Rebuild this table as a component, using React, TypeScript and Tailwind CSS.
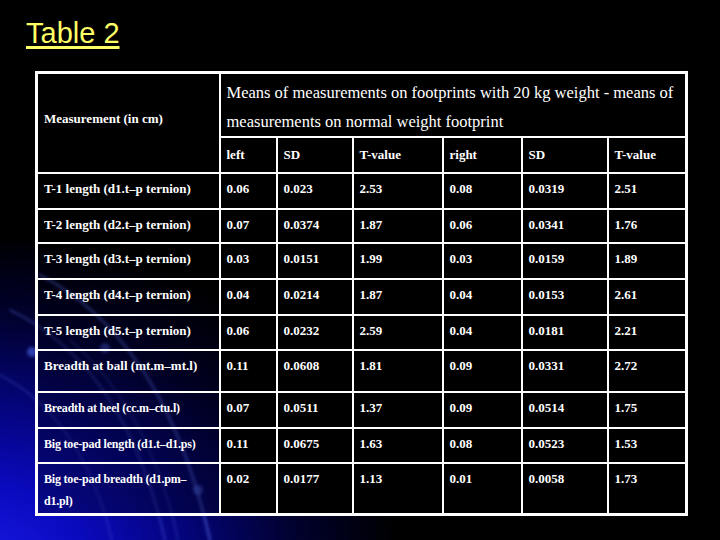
import React from "react";

type Row = {
  label: React.ReactNode;
  v: string[];
  h: string;
  small?: boolean;
};

const rows: Row[] = [
  { label: "T-1 length (d1.t–p ternion)", v: ["0.06", "0.023", "2.53", "0.08", "0.0319", "2.51"], h: "h-[36px]" },
  { label: "T-2 length (d2.t–p ternion)", v: ["0.07", "0.0374", "1.87", "0.06", "0.0341", "1.76"], h: "h-[34px]" },
  { label: "T-3 length (d3.t–p ternion)", v: ["0.03", "0.0151", "1.99", "0.03", "0.0159", "1.89"], h: "h-[36px]" },
  { label: "T-4 length (d4.t–p ternion)", v: ["0.04", "0.0214", "1.87", "0.04", "0.0153", "2.61"], h: "h-[36px]" },
  { label: "T-5 length (d5.t–p ternion)", v: ["0.06", "0.0232", "2.59", "0.04", "0.0181", "2.21"], h: "h-[35px]" },
  { label: "Breadth at ball (mt.m–mt.l)", v: ["0.11", "0.0608", "1.81", "0.09", "0.0331", "2.72"], h: "h-[42px]" },
  { label: "Breadth at heel (cc.m–ctu.l)", v: ["0.07", "0.0511", "1.37", "0.09", "0.0514", "1.75"], h: "h-[36px]", small: true },
  { label: "Big toe-pad length (d1.t–d1.ps)", v: ["0.11", "0.0675", "1.63", "0.08", "0.0523", "1.53"], h: "h-[35px]", small: true },
  {
    label: (
      <>
        Big toe-pad breadth (d1.pm–
        <br />
        d1.pl)
      </>
    ),
    v: ["0.02", "0.0177", "1.13", "0.01", "0.0058", "1.73"],
    h: "h-[51px]",
    small: true,
  },
];

function Background() {
  return (
    <svg className="absolute inset-0 w-full h-full" viewBox="0 0 720 540" preserveAspectRatio="none">
      <defs>
        <radialGradient
          id="bg"
          cx="-20"
          cy="570"
          r="420"
          gradientUnits="userSpaceOnUse"
          gradientTransform="translate(-20 570) scale(1 0.8) translate(20 -570)"
        >
          <stop offset="0" stopColor="#1a1ae6" />
          <stop offset="0.25" stopColor="#0a0ac0" />
          <stop offset="0.5" stopColor="#04047a" />
          <stop offset="0.75" stopColor="#010130" />
          <stop offset="1" stopColor="#000000" />
        </radialGradient>
        <filter id="blur" x="-50%" y="-50%" width="200%" height="200%">
          <feGaussianBlur stdDeviation="1.5" />
        </filter>
      </defs>
      <rect width="720" height="540" fill="#000" />
      <rect width="720" height="540" fill="url(#bg)" />
      <g fill="none" stroke="#5a70f0" strokeLinecap="round" filter="url(#blur)">
        <path d="M40 275 Q165 340 210 540" strokeWidth="3" strokeOpacity="0.45" />
        <path d="M10 310 Q125 365 165 540" strokeWidth="2" strokeOpacity="0.35" />
        <path d="M70 340 Q150 410 178 540" strokeWidth="1.5" strokeOpacity="0.3" />
        <path d="M-10 370 Q80 410 112 540" strokeWidth="2" strokeOpacity="0.25" />
      </g>
      <g fill="#4a62e8" filter="url(#blur)">
        <circle cx="32" cy="352" r="5" fillOpacity="0.6" />
        <circle cx="105" cy="348" r="5" fillOpacity="0.5" />
        <circle cx="198" cy="490" r="5" fillOpacity="0.5" />
      </g>
    </svg>
  );
}

export default function App() {
  const head = "border-2 border-white bg-black align-middle pl-[6px] leading-[22px] text-[13px] font-bold";
  const data = "border-2 border-white bg-black align-top pl-[6px] pt-[4px] leading-[22px] text-[13px] font-bold";
  return (
    <div className="relative w-[720px] h-[540px] overflow-hidden bg-black" style={{ fontFamily: '"Liberation Serif", "Times New Roman", serif' }}>
      <Background />
      <div className="relative">
        <div className="pl-[26px] pt-[17px]">
          <span
            className="text-[29px] leading-[33px] text-[#ffff66] underline decoration-[3px] underline-offset-[3px]"
            style={{ fontFamily: '"Liberation Sans", Arial, sans-serif' }}
          >
            Table 2
          </span>
        </div>
        <table className="ml-[35px] mt-[21px] w-[650px] table-fixed border-collapse border-[3px] border-white text-white">
          <colgroup>
            <col className="w-[183px]" />
            <col className="w-[57px]" />
            <col className="w-[76px]" />
            <col className="w-[90px]" />
            <col className="w-[79px]" />
            <col className="w-[86px]" />
            <col className="w-[79px]" />
          </colgroup>
          <tbody>
            <tr className="h-[64px]">
              <td rowSpan={2} className="border-2 border-white bg-black align-middle pl-[6px] pb-[8px] text-[13px] font-bold">
                Measurement (in cm)
              </td>
              <td colSpan={6} className="border-2 border-white bg-black align-top pl-[6px] pt-[4px] leading-[29px] text-[16.5px]">
                Means of measurements on footprints with 20 kg weight - means of measurements on normal weight footprint
              </td>
            </tr>
            <tr className="h-[36px]">
              <td className={head}>left</td>
              <td className={head}>SD</td>
              <td className={head}>T-value</td>
              <td className={head}>right</td>
              <td className={head}>SD</td>
              <td className={head}>T-value</td>
            </tr>
            {rows.map((r, i) => (
              <tr key={i} className={r.h}>
                <td
                  className={
                    r.small
                      ? "border-2 border-white bg-black/30 align-top pl-[6px] pt-[4px] leading-[22px] text-[12px] font-bold tracking-[-0.2px]"
                      : "border-2 border-white bg-black/30 align-top pl-[6px] pt-[4px] leading-[22px] text-[13px] font-bold"
                  }
                >
                  {r.label}
                </td>
                {r.v.map((x, j) => (
                  <td key={j} className={data}>
                    {x}
                  </td>
                ))}
              </tr>
            ))}
          </tbody>
        </table>
      </div>
    </div>
  );
}
